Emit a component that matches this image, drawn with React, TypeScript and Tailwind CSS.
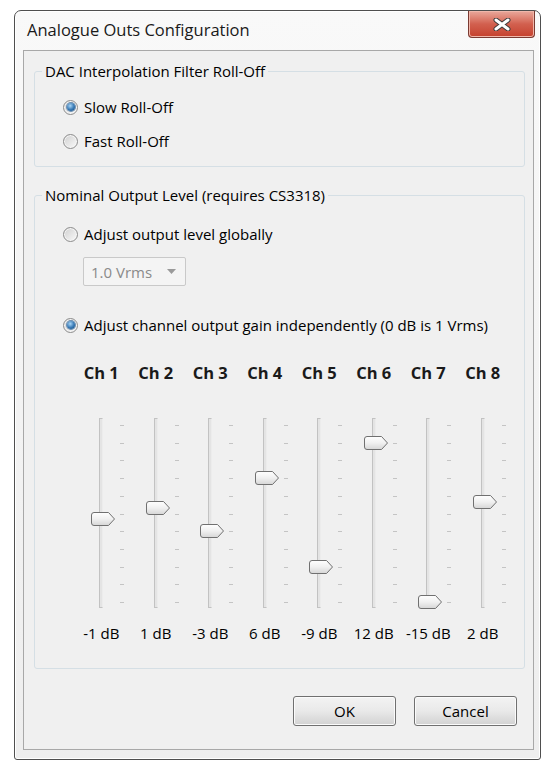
const channels = [
  { name: "Ch 1", db: -1 },
  { name: "Ch 2", db: 1 },
  { name: "Ch 3", db: -3 },
  { name: "Ch 4", db: 6 },
  { name: "Ch 5", db: -9 },
  { name: "Ch 6", db: 12 },
  { name: "Ch 7", db: -15 },
  { name: "Ch 8", db: 2 },
];

const ticks = [0, 1, 2, 3, 4, 5, 6, 7, 8, 9, 10];

function Radio({ checked, label }: { checked?: boolean; label: string }) {
  return (
    <div className="flex h-[20px] items-center gap-[6px] pl-[28px]">
      <span className="flex h-[15px] w-[15px] shrink-0 items-center justify-center rounded-full border border-[#8c8c8c] bg-linear-to-br from-[#cfcfcf] to-[#fbfbfb] shadow-[inset_0_0_0_1px_#f6f6f6]">
        {checked && (
          <span className="h-[8px] w-[8px] rounded-full bg-[radial-gradient(circle_at_40%_35%,#a9d6f7,#3577b3_55%,#16497a)] shadow-[0_0_0_1px_#6b8eb0]" />
        )}
      </span>
      <span>{label}</span>
    </div>
  );
}

function Thumb() {
  return (
    <svg width="25" height="14" viewBox="0 0 25 14">
      <defs>
        <linearGradient id="thumbFill" x1="0" y1="0" x2="0" y2="1">
          <stop offset="0" stopColor="#ffffff" />
          <stop offset="0.5" stopColor="#f0f0f0" />
          <stop offset="1" stopColor="#d6d6d6" />
        </linearGradient>
      </defs>
      <path
        d="M3 0.5 H17.5 L23.5 7 L17.5 13.5 H3 Q0.5 13.5 0.5 11 V3 Q0.5 0.5 3 0.5 Z"
        fill="url(#thumbFill)"
        stroke="#707070"
      />
    </svg>
  );
}

function Slider({ db }: { db: number }) {
  // thumb centre, px from the top of the track: +15 dB at 7, -15 dB at 184
  const centre = 184 - (db + 15) * 5.9;
  return (
    <div className="relative h-[190px] w-full">
      <div className="absolute left-[25px] top-0 h-full w-[4px] border border-[#c2c2c2] border-r-[#ececec] bg-[#e4e4e4]" />
      {ticks.map((t) => (
        <div
          key={t}
          className="absolute left-[46px] h-px w-[4px] bg-[#c4c4c4]"
          style={{ top: 7 + t * 17.7 }}
        />
      ))}
      <div className="absolute left-[17px]" style={{ top: centre - 7 }}>
        <Thumb />
      </div>
    </div>
  );
}

function WinButton({ label }: { label: string }) {
  return (
    <button className="h-[30px] w-[103px] rounded-[3px] border border-[#707070] bg-linear-to-b from-[#f3f3f3] via-[#e9e9e9] to-[#d2d2d2] text-black shadow-[inset_0_0_0_1px_#fbfbfb]">
      {label}
    </button>
  );
}

export default function App() {
  return (
    <div className="h-[774px] w-[556px] bg-white pl-[14px] pt-[10px] font-['Open_Sans',sans-serif] text-[15px] leading-[20px] text-black">
      {/* window frame */}
      <div className="flex h-[750px] w-[527px] flex-col rounded-t-[7px] rounded-b-[3px] border border-[#4f4f4f] bg-linear-to-b from-[#f9f9f9] to-[#eeeeee] shadow-[inset_0_0_0_1px_#ffffff]">
        {/* title bar */}
        <div className="flex h-[39px] shrink-0 items-start justify-between">
          <span className="pl-[12px] pt-[9px] text-[16.5px] text-[#1a1a1a]">Analogue Outs Configuration</span>
          <div className="mr-[5px] flex h-[27px] w-[67px] items-center justify-center rounded-b-[4px] border border-t-0 border-[#7a3a32] bg-linear-to-b from-[#e9a89c] via-[#d2604f] to-[#c5402c] shadow-[inset_0_0_0_1px_#f0b7aa]">
            <svg width="18" height="13" viewBox="0 0 18 13">
              <path d="M3 2 L15 11 M15 2 L3 11" stroke="#3b3b3b" strokeWidth="5" strokeLinecap="round" />
              <path d="M3 2 L15 11 M15 2 L3 11" stroke="#ffffff" strokeWidth="3" strokeLinecap="round" />
            </svg>
          </div>
        </div>

        {/* client area */}
        <div className="mb-[9px] ml-[8px] mr-[6px] flex flex-1 flex-col border border-[#a8a8a8] bg-[#f0f0f0] pl-[10px] pr-[8px] pt-[10px]">
          <fieldset className="rounded-[3px] border border-[#d5dfe5] pb-[15px]">
            <legend className="ml-[7px] px-[3px]">DAC Interpolation Filter Roll-Off</legend>
            <div className="mt-[16px]">
              <Radio checked label="Slow Roll-Off" />
            </div>
            <div className="mt-[14px]">
              <Radio label="Fast Roll-Off" />
            </div>
          </fieldset>

          <fieldset className="mt-[18px] rounded-[3px] border border-[#d5dfe5] pb-[25px]">
            <legend className="ml-[7px] px-[3px]">Nominal Output Level (requires CS3318)</legend>
            <div className="mt-[19px]">
              <Radio label="Adjust output level globally" />
            </div>
            <div className="ml-[48px] mt-[13px] flex h-[29px] w-[103px] items-center justify-between rounded-[2px] border border-[#c9c9c9] bg-[#f4f4f4] pl-[7px] pr-[9px] text-[#8a8a8a]">
              <span>1.0 Vrms</span>
              <svg width="9" height="5" viewBox="0 0 9 5">
                <path d="M0 0 H9 L4.5 5 Z" fill="#9a9a9a" />
              </svg>
            </div>
            <div className="mt-[29px]">
              <Radio checked label="Adjust channel output gain independently (0 dB is 1 Vrms)" />
            </div>

            <div className="mt-[28px] flex pl-[39px]">
              {channels.map((c) => (
                <div key={c.name} className="flex w-[54.5px] flex-col items-center">
                  <div className="w-full whitespace-nowrap text-center text-[16.5px] font-bold text-[#1a1a1a]">{c.name}</div>
                  <div className="mt-[35px] w-full">
                    <Slider db={c.db} />
                  </div>
                  <div className="mt-[15px] w-full whitespace-nowrap text-center">{c.db} dB</div>
                </div>
              ))}
            </div>
          </fieldset>

          <div className="mt-[27px] flex justify-end gap-[18px] pr-[8px]">
            <WinButton label="OK" />
            <WinButton label="Cancel" />
          </div>
        </div>
      </div>
    </div>
  );
}
